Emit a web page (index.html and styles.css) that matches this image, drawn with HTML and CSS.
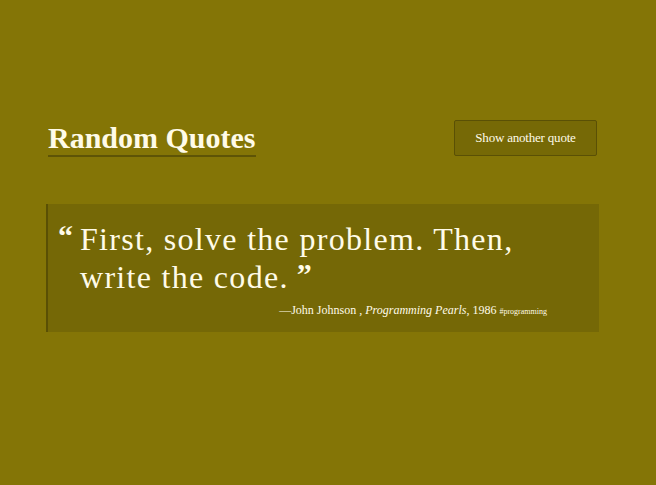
FILE: index.html
```html
<!DOCTYPE html>
<html>
<head>
<meta charset="utf-8">
<link rel="stylesheet" href="styles.css">
</head>
<body>
<div class="page">
  <header class="top">
    <h1 class="title">Random Quotes</h1>
    <button class="btn">Show another quote</button>
  </header>
  <blockquote class="quote">
    <p class="text"><span class="mark open">&ldquo;</span>First, solve the problem. Then, write the code.<span class="mark close">&rdquo;</span></p>
    <p class="cite">&mdash;John Johnson , <em>Programming Pearls</em>, 1986 <span class="tag">#programming</span></p>
  </blockquote>
</div>
</body>
</html>
```
FILE: styles.css
```css
html, body {
  margin: 0;
  padding: 0;
  background: #847506;
  height: 100%;
}
body {
  font-family: "Liberation Serif", "DejaVu Serif", serif;
  color: #fffbe8;
}
.page {
  padding: 120px 57px 0 46px;
}
.top {
  display: flex;
  justify-content: space-between;
  align-items: flex-start;
  padding-left: 2px;
}
.title {
  margin: 0;
  font-size: 30px;
  font-weight: 700;
  line-height: 34px;
  padding-top: 1px;
  padding-bottom: 0;
  border-bottom: 2px solid #5e5406;
}
.btn {
  font-family: inherit;
  font-size: 13px;
  color: #fffbe8;
  background: #766906;
  border: 1px solid #5a5005;
  border-radius: 2px;
  width: 143px;
  height: 36px;
  padding: 0;
  margin-right: 2px;
  letter-spacing: -0.2px;
}
.quote {
  margin: 47px 0 0 0;
  background: #756806;
  border-left: 2px solid #5a5004;
  padding: 16px 12px 13px 10px;
}
.text {
  margin: 0;
  padding-left: 22px;
  font-size: 32px;
  letter-spacing: 1.3px;
  line-height: 38px;
  position: relative;
}
.mark {
  font-weight: 700;
  font-size: 30px;
  letter-spacing: 0;
  line-height: 0;
}
.open {
  position: absolute;
  left: 0;
  top: 16px;
}
.close {
  margin-left: 8px;
  vertical-align: 4px;
}
.cite {
  margin: 7px 40px 0 0;
  text-align: right;
  font-size: 12px;
  line-height: 14px;
}
.tag {
  font-size: 8px;
}
```
